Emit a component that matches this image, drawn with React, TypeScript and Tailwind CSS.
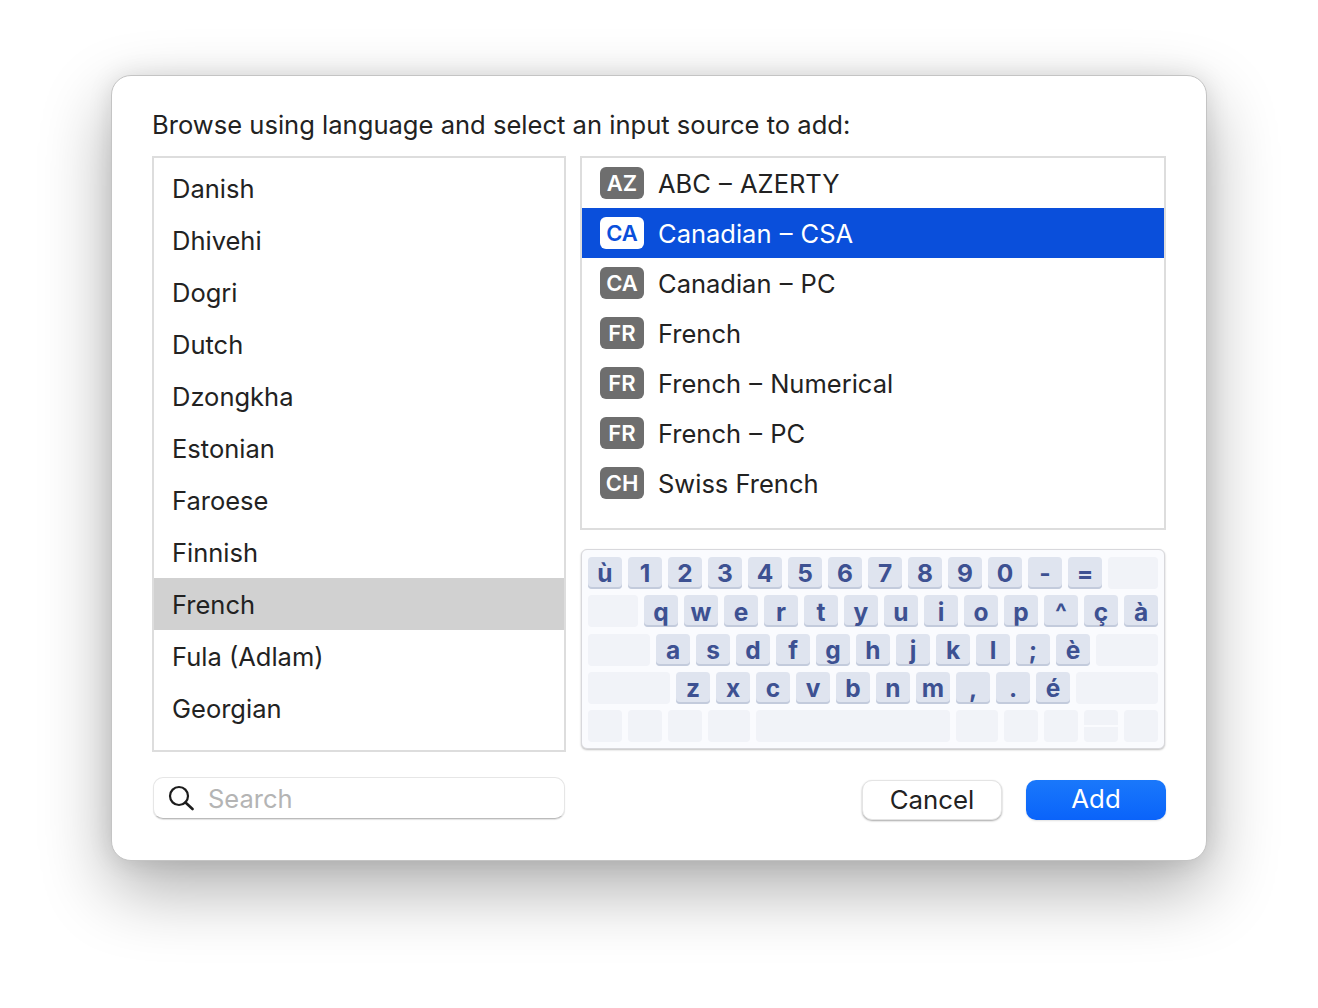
const languages = ["Danish", "Dhivehi", "Dogri", "Dutch", "Dzongkha", "Estonian", "Faroese", "Finnish", "French", "Fula (Adlam)", "Georgian"];

const sources = [
  { code: "AZ", name: "ABC – AZERTY" },
  { code: "CA", name: "Canadian – CSA", selected: true },
  { code: "CA", name: "Canadian – PC" },
  { code: "FR", name: "French" },
  { code: "FR", name: "French – Numerical" },
  { code: "FR", name: "French – PC" },
  { code: "CH", name: "Swiss French" },
];

function Key({ label }: { label: string }) {
  return (
    <div className="flex h-8 w-[34px] items-center justify-center rounded-[4px] bg-[#dfe4ef] text-[24.5px] font-bold leading-none text-[#3d5192] shadow-[inset_0_-2px_0_#c3cbdc]">
      <span className="mt-[1px]">{label}</span>
    </div>
  );
}

function Blank({ w }: { w: string }) {
  return <div className={`h-8 rounded-[4px] bg-[#f1f3f8] ${w}`} />;
}

function KeyRow({ keys }: { keys: string }) {
  return (
    <>
      {keys.split(" ").map((k) => (
        <Key key={k} label={k} />
      ))}
    </>
  );
}

export default function App() {
  return (
    <div className="h-[1008px] w-[1318px] overflow-hidden bg-white pl-[111px] pt-[75px] font-['Inter',sans-serif] text-[#222]">
      <div className="flex h-[786px] w-[1096px] flex-col rounded-[20px] border border-[#c4c4c4] bg-white px-10 pt-[33px] shadow-[0_28px_70px_rgba(0,0,0,0.32),0_0_24px_rgba(0,0,0,0.1)]">
        <p className="h-[47px] text-[25.57px] leading-[32px]">Browse using language and select an input source to add:</p>

        <div className="flex gap-[14px]">
          {/* language list */}
          <div className="h-[596px] w-[414px] border-2 border-[#dddddd] pt-[4px]">
            {languages.map((l) => (
              <div key={l} className={`flex h-[52px] items-center px-[18px] pt-[2px] text-[25.5px] ${l === "French" ? "bg-[#d1d1d1]" : ""}`}>
                {l}
              </div>
            ))}
          </div>

          <div className="flex w-[586px] flex-col">
            {/* input sources */}
            <div className="h-[374px] border-2 border-[#dddddd]">
              {sources.map((s) => (
                <div key={s.name} className={`flex h-[50px] items-center gap-[14px] pl-[18px] text-[25.5px] ${s.selected ? "bg-[#0a4fdb] text-white" : ""}`}>
                  <span className={`flex h-8 w-11 items-center justify-center rounded-[6px] pt-[1px] text-[22px] font-semibold ${s.selected ? "bg-white text-[#0a4fdb]" : "bg-[#6e6e6e] text-white"}`}>
                    {s.code}
                  </span>
                  <span className={`mt-[2px] ${s.name.includes("–") ? "[word-spacing:1px]" : ""}`}>{s.name}</span>
                </div>
              ))}
            </div>

            {/* keyboard preview */}
            <div className="ml-[1px] mt-[19px] flex h-[200px] w-[584px] flex-col gap-[6.33px] rounded-[6px] border border-[#d8d8dc] bg-[#fafbfe] px-[6px] pt-[7px] shadow-[0_1px_2px_rgba(0,0,0,0.25)]">
              <div className="flex gap-[6px]">
                <KeyRow keys="ù 1 2 3 4 5 6 7 8 9 0 - =" />
                <Blank w="w-[50px]" />
              </div>
              <div className="flex gap-[6px]">
                <Blank w="w-[50px]" />
                <KeyRow keys="q w e r t y u i o p ^ ç à" />
              </div>
              <div className="flex gap-[6px]">
                <Blank w="w-[62px]" />
                <KeyRow keys="a s d f g h j k l ; è" />
                <Blank w="w-[62px]" />
              </div>
              <div className="flex gap-[6px]">
                <Blank w="w-[82px]" />
                <KeyRow keys="z x c v b n m , . é" />
                <Blank w="w-[82px]" />
              </div>
              <div className="flex gap-[6px]">
                <Blank w="w-[34px]" />
                <Blank w="w-[34px]" />
                <Blank w="w-[34px]" />
                <Blank w="w-[42px]" />
                <Blank w="w-[194px]" />
                <Blank w="w-[42px]" />
                <Blank w="w-[34px]" />
                <Blank w="w-[34px]" />
                <div className="flex h-8 w-[34px] flex-col gap-[2px]">
                  <div className="h-[15px] rounded-t-[4px] bg-[#f1f3f8]" />
                  <div className="h-[15px] rounded-b-[4px] bg-[#f1f3f8]" />
                </div>
                <Blank w="w-[34px]" />
              </div>
            </div>
          </div>
        </div>

        {/* footer */}
        <div className="mt-[25px] flex items-start justify-between">
          <div className="ml-[1px] flex h-[42px] w-[412px] items-center rounded-[10px] border border-[#e6e6e6] border-b-[#bbbbbb] bg-white pl-[14px] shadow-[0_1px_1px_rgba(0,0,0,0.12)]">
            <svg width="26" height="26" viewBox="0 0 26 26" fill="none" stroke="#1c1c1c" strokeWidth="2.2" strokeLinecap="round">
              <circle cx="11" cy="11" r="9" />
              <path d="M17.5 17.5 L24.5 24" strokeWidth="2.6" />
            </svg>
            <span className="ml-[14px] mt-[2px] text-[25.5px] text-[#b4b4b4]">Search</span>
          </div>
          <div className="mt-[3px] flex gap-6">
            <button className="h-10 w-[140px] rounded-[10px] border border-[#e4e4e4] bg-white pb-[5px] text-[25.8px] text-[#222] shadow-[0_1px_2px_rgba(0,0,0,0.35)]">Cancel</button>
            <button className="h-10 w-[140px] rounded-[10px] bg-gradient-to-b from-[#1a78fb] to-[#0a63fa] pb-[5px] text-[25.8px] text-white shadow-[0_1px_2px_rgba(0,0,0,0.12)]">Add</button>
          </div>
        </div>
      </div>
    </div>
  );
}
